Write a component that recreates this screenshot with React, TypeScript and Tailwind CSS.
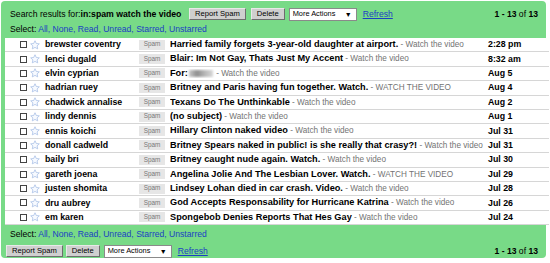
import React from "react";

type Row = {
  from: string;
  subject: string;
  snippet: string;
  date: string;
  blur?: boolean;
};

const rows: Row[] = [
  { from: "brewster coventry", subject: "Harried family forgets 3-year-old daughter at airport.", snippet: "Watch the video", date: "2:28 pm" },
  { from: "lenci dugald", subject: "Blair: Im Not Gay, Thats Just My Accent", snippet: "Watch the video", date: "8:32 am" },
  { from: "elvin cyprian", subject: "For:", snippet: "Watch the video", date: "Aug 5", blur: true },
  { from: "hadrian ruey", subject: "Britney and Paris having fun together. Watch.", snippet: "WATCH THE VIDEO", date: "Aug 4" },
  { from: "chadwick annalise", subject: "Texans Do The Unthinkable", snippet: "Watch the video", date: "Aug 2" },
  { from: "lindy dennis", subject: "(no subject)", snippet: "Watch the video", date: "Aug 1" },
  { from: "ennis koichi", subject: "Hillary Clinton naked video", snippet: "Watch the video", date: "Jul 31" },
  { from: "donall cadweld", subject: "Britney Spears naked in public! is she really that crasy?!", snippet: "Watch the video", date: "Jul 31" },
  { from: "baily bri", subject: "Britney caught nude again. Watch.", snippet: "Watch the video", date: "Jul 30" },
  { from: "gareth joena", subject: "Angelina Jolie And The Lesbian Lover. Watch.", snippet: "WATCH THE VIDEO", date: "Jul 29" },
  { from: "justen shomita", subject: "Lindsey Lohan died in car crash. Video.", snippet: "Watch the video", date: "Jul 28" },
  { from: "dru aubrey", subject: "God Accepts Responsability for Hurricane Katrina", snippet: "Watch the video", date: "Jul 26" },
  { from: "em karen", subject: "Spongebob Denies Reports That Hes Gay", snippet: "Watch the video", date: "Jul 24" },
];

function Star() {
  return (
    <svg width="10" height="10" viewBox="0 0 20 20" className="shrink-0">
      <path
        d="M10 1.5l2.6 5.5 6 .7-4.4 4.1 1.2 5.9L10 14.8l-5.4 2.9 1.2-5.9L1.4 7.7l6-.7z"
        fill="#f7faff"
        stroke="#a9c0e6"
        strokeWidth="1.6"
        strokeLinejoin="round"
      />
    </svg>
  );
}

function Button({ label }: { label: string }) {
  return (
    <div className="flex h-[12px] items-center border border-t-[#e8e8e8] border-l-[#e8e8e8] border-r-[#6d6d6d] border-b-[#6d6d6d] bg-[#cfcfcf] px-[5px] text-[7.6px] leading-none text-black">
      {label}
    </div>
  );
}

function Actions({ big }: { big?: boolean }) {
  return (
    <div className="flex items-center">
      <Button label="Report Spam" />
      <div className={big ? "ml-[3px]" : "ml-[5px]"}>
        <Button label="Delete" />
      </div>
      <div className="ml-[4px] flex h-[13px] w-[68px] items-center justify-between border border-[#8a8a8a] bg-white pl-[3px] pr-[4px] text-[7.4px] leading-none">
        <span>More Actions</span>
        <span className="text-[7px]">▼</span>
      </div>
      <span className="ml-[6px] text-[8.6px] leading-none text-[#1b3fc4] underline">
        Refresh
      </span>
    </div>
  );
}

function Select() {
  return (
    <div className="text-[8.6px] leading-[10px] text-black">
      Select:{" "}
      <span className="text-[#1b3fc4]">
        All, None, Read, Unread, Starred, Unstarred
      </span>
    </div>
  );
}

function Count() {
  return (
    <div className="text-[8.6px] leading-none text-black">
      <b>1</b> <b>-</b> <b>13</b> of <b>13</b>
    </div>
  );
}

export default function App() {
  return (
    <div className="h-[263px] w-[550px] overflow-hidden bg-white pl-px pt-px font-['Liberation_Sans',Arial,sans-serif]">
      <div className="h-[257px] w-[545px] rounded-[4px] bg-[#78da87] pt-[7px]">
        <div className="flex h-[12px] items-center pl-[9px] pr-[8px]">
          <div className="w-[179px] text-[8.7px] leading-none">
            Search results for:<b>in:spam watch the video</b>
          </div>
          <Actions />
          <div className="ml-auto">
            <Count />
          </div>
        </div>
        <div className="mt-[4px] h-[10px] pl-[9px]">
          <Select />
        </div>
        <div className="ml-[4px] mt-[4px] w-[544px] bg-white">
          {rows.map((r) => (
            <div
              key={r.from}
              className="flex h-[14.4px] items-center border-b border-[#d6d6d6] text-[8.8px] leading-none text-black"
            >
              <div className="ml-[15px] h-[7px] w-[7px] shrink-0 border border-[#444] bg-white" />
              <div className="ml-[3px]">
                <Star />
              </div>
              <div className="ml-[5px] w-[94px] shrink-0 font-bold">{r.from}</div>
              <div className="flex h-[10px] w-[26px] shrink-0 items-center justify-center bg-[#e6e6e6] text-[6.4px] text-[#777]">
                Spam
              </div>
              <div className="ml-[5px] min-w-0 flex-1 overflow-hidden whitespace-nowrap">
                <b className="text-[9.2px]">{r.subject}</b>
                {r.blur && (
                  <span className="mx-px inline-block h-[7px] w-[24px] bg-[linear-gradient(90deg,#c8c8c8,#8e8e8e,#b8b8b8,#d8d8d8)] align-middle blur-[1px]" />
                )}
                <span className="text-[8.2px] text-[#737373]"> - {r.snippet}</span>
              </div>
              <div className="w-[61px] shrink-0 font-bold">{r.date}</div>
            </div>
          ))}
        </div>
        <div className="mt-[4px] h-[10px] pl-[9px]">
          <Select />
        </div>
        <div className="mt-[6px] flex h-[12px] items-center pl-[5px] pr-[8px]">
          <Actions big />
          <div className="ml-auto">
            <Count />
          </div>
        </div>
      </div>
    </div>
  );
}
